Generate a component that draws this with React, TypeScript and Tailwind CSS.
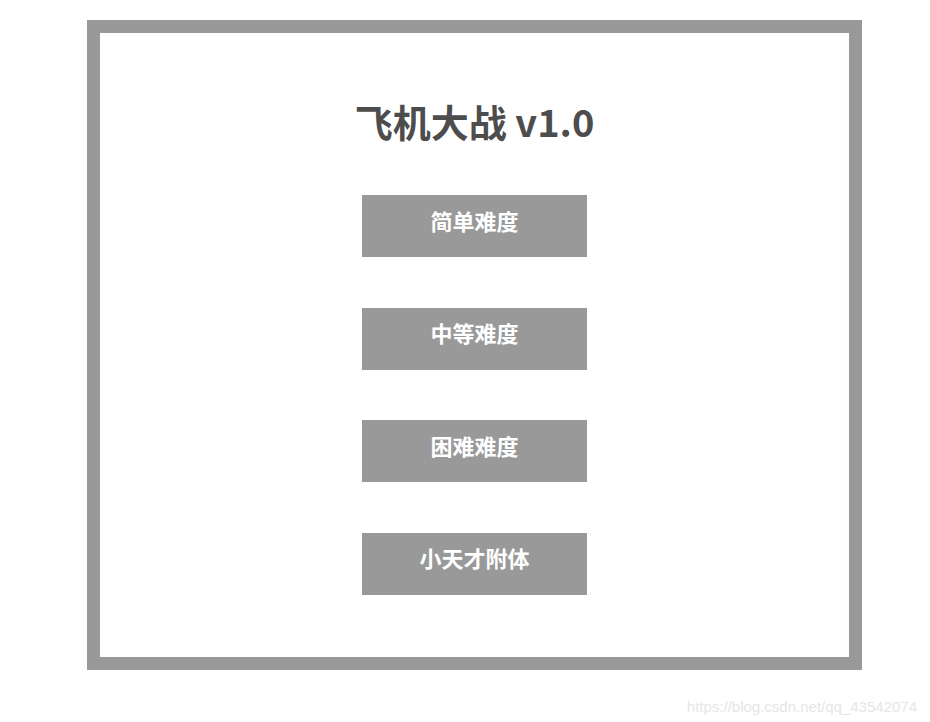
export default function App() {
  const items = ["简单难度", "中等难度", "困难难度", "小天才附体"];
  return (
    <div
      className="w-[930px] h-[722px] bg-white overflow-hidden"
      style={{ fontFamily: '"Noto Sans CJK SC", "Noto Sans", sans-serif' }}
    >
      <div className="pt-[20px] pl-[87px]">
        <div className="w-[775px] h-[650px] border-[13px] border-[#999999] flex flex-col items-center">
          <div className="mt-[65px] h-[46px] leading-[46px] text-[38px] font-bold text-[#4d4d4d]">
            飞机大战 v1.0
          </div>
          <div className="mt-[51px] flex flex-col gap-[50.5px]">
            {items.map((t) => (
              <div
                key={t}
                className="w-[225px] h-[62px] bg-[#999999] text-white text-[22px] font-bold flex items-center justify-center pb-[12px]"
              >
                {t}
              </div>
            ))}
          </div>
        </div>
      </div>
      <div className="flex justify-end pr-[13px] mt-[27px]">
        <span
          className="text-[15px] leading-[20px] text-[#e6e6e6]"
          style={{ fontFamily: '"Liberation Sans", Arial, sans-serif' }}
        >
          https://blog.csdn.net/qq_43542074
        </span>
      </div>
    </div>
  );
}
